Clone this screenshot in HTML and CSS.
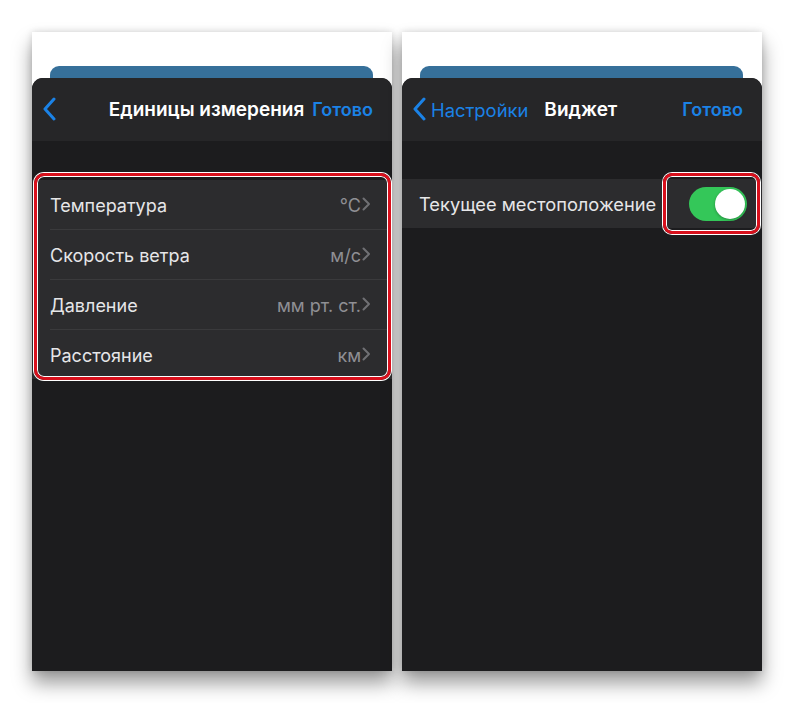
FILE: index.html
```html
<!DOCTYPE html>
<html lang="ru">
<head>
<meta charset="utf-8">
<link rel="stylesheet" href="styles.css">
</head>
<body>
<div class="shots">
  <section class="phone">
    <div class="sheet-top"><div class="under-card"></div></div>
    <div class="panel">
      <header class="nav">
        <div class="nav-left">
          <svg class="back" width="14" height="24" viewBox="0 0 14 24"><path d="M12 2 L3 12 L12 22" fill="none" stroke="#1b82e6" stroke-width="3" stroke-linecap="round" stroke-linejoin="round"/></svg>
        </div>
        <div class="nav-title left-title">Единицы измерения</div>
        <div class="nav-done">Готово</div>
      </header>
      <div class="content">
        <div class="group">
          <div class="row"><span class="label">Температура</span><span class="value">°C<svg class="chev" width="9" height="14" viewBox="0 0 9 14"><path d="M1.5 1.5 L7 7 L1.5 12.5" fill="none" stroke="#707074" stroke-width="2" stroke-linecap="round" stroke-linejoin="round"/></svg></span></div>
          <div class="row"><span class="label">Скорость ветра</span><span class="value">м/с<svg class="chev" width="9" height="14" viewBox="0 0 9 14"><path d="M1.5 1.5 L7 7 L1.5 12.5" fill="none" stroke="#707074" stroke-width="2" stroke-linecap="round" stroke-linejoin="round"/></svg></span></div>
          <div class="row"><span class="label">Давление</span><span class="value">мм рт. ст.<svg class="chev" width="9" height="14" viewBox="0 0 9 14"><path d="M1.5 1.5 L7 7 L1.5 12.5" fill="none" stroke="#707074" stroke-width="2" stroke-linecap="round" stroke-linejoin="round"/></svg></span></div>
          <div class="row"><span class="label">Расстояние</span><span class="value">км<svg class="chev" width="9" height="14" viewBox="0 0 9 14"><path d="M1.5 1.5 L7 7 L1.5 12.5" fill="none" stroke="#707074" stroke-width="2" stroke-linecap="round" stroke-linejoin="round"/></svg></span></div>
          <div class="highlight hl-list"></div>
        </div>
      </div>
    </div>
  </section>

  <section class="phone">
    <div class="sheet-top"><div class="under-card"></div></div>
    <div class="panel">
      <header class="nav">
        <div class="nav-left back-link">
          <svg class="back" width="14" height="24" viewBox="0 0 14 24"><path d="M12 2 L3 12 L12 22" fill="none" stroke="#1b82e6" stroke-width="3" stroke-linecap="round" stroke-linejoin="round"/></svg>
          <span>Настройки</span>
        </div>
        <div class="nav-title right-title">Виджет</div>
        <div class="nav-done">Готово</div>
      </header>
      <div class="content">
        <div class="group group-single">
          <div class="row row-toggle"><span class="label">Текущее местоположение</span><span class="toggle"><span class="knob"></span></span></div>
          <div class="highlight hl-toggle"></div>
        </div>
      </div>
    </div>
  </section>
</div>
</body>
</html>
```

FILE: styles.css
```css
html, body {
  margin: 0;
  padding: 0;
  background: #ffffff;
}
body {
  font-family: "Inter", "Liberation Sans", Arial, sans-serif;
  width: 794px;
  height: 703px;
  overflow: hidden;
}
.shots {
  display: flex;
  gap: 10px;
  padding: 32px 0 0 32px;
}
.phone {
  width: 360px;
  height: 639px;
  display: flex;
  flex-direction: column;
  background: #ffffff;
  box-shadow: 0 12px 18px rgba(0, 0, 0, 0.4), 0 0 7px rgba(0, 0, 0, 0.15);
}
.sheet-top {
  height: 46px;
  display: flex;
  flex-direction: column;
  justify-content: flex-end;
  padding: 0 19px 0 18px;
}
.under-card {
  height: 12px;
  background: #36709a;
  border-radius: 9px 9px 0 0;
}
.panel {
  flex: 1;
  background: #1c1c1e;
  border-radius: 11px 11px 0 0;
  overflow: hidden;
  display: flex;
  flex-direction: column;
}
.nav {
  height: 63px;
  background: #262628;
  display: flex;
  align-items: center;
  padding: 0 19px 0 10px;
  color: #ffffff;
  font-size: 18px;
}
.nav-left {
  display: flex;
  align-items: center;
  color: #1b82e6;
  min-width: 24px;
}
.back {
  display: block;
  margin-top: -1px;
}
.left-title {
  flex: 1;
  text-align: right;
  padding-right: 8px;
}
.back-link span {
  margin-left: 5px;
  font-size: 18.4px;
}
.right-title {
  flex: 1;
  padding-left: 16px;
}
.nav-title {
  font-weight: 600;
  font-size: 19px;
  margin-top: -1px;
}
.nav-done {
  color: #1b82e6;
  font-weight: 600;
  margin-top: -1px;
}
.content {
  padding-top: 39px;
}
.group {
  position: relative;
  background: #2c2c2e;
}
.group-single {
  margin-top: -1px;
}
.row {
  height: 49px;
  display: flex;
  align-items: center;
  justify-content: space-between;
  margin-left: 18px;
  padding-right: 21px;
  border-bottom: 1px solid #3a3a3c;
  font-size: 18px;
  color: #e6e6e8;
  padding-top: 1px;
  box-sizing: border-box;
  height: 50px;
}
.row:nth-last-child(2) {
  border-bottom: none;
  height: 49px;
}
.row-toggle {
  height: 50px;
  border-bottom: none;
  margin-left: 17px;
  padding-right: 15px;
  font-size: 18.3px;
}
.value {
  display: flex;
  align-items: center;
  color: #8f8f94;
}
.chev {
  display: block;
  margin-left: 1px;
  margin-top: -2px;
}
.toggle {
  width: 58px;
  height: 34px;
  border-radius: 17px;
  background: #34c759;
  display: flex;
  align-items: center;
  justify-content: flex-end;
  padding: 0 2px;
  box-sizing: border-box;
}
.knob {
  width: 30px;
  height: 30px;
  border-radius: 50%;
  background: #ffffff;
  box-shadow: 0 1px 3px rgba(0, 0, 0, 0.3);
}
.highlight {
  position: absolute;
  border: 3px solid #d8101c;
  border-radius: 10px;
  box-shadow: 0 0 0 1px #ffffff, inset 0 0 0 1px #ffffff;
  pointer-events: none;
}
.hl-list {
  left: 2px;
  right: 1px;
  top: -7px;
  bottom: -1px;
}
.hl-toggle {
  left: 261px;
  right: 2px;
  top: -6px;
  bottom: -6px;
  border-radius: 9px;
}
```
